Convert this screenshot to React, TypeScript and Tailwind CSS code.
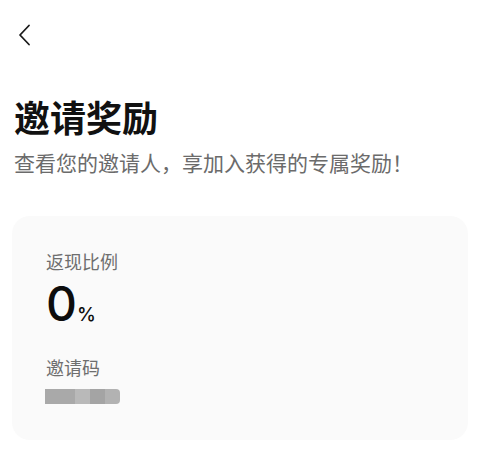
import React from "react";

export default function App() {
  return (
    <div
      className="w-[483px] h-[469px] bg-white overflow-hidden"
      style={{ fontFamily: '"Noto Sans CJK SC", "Noto Sans", sans-serif' }}
    >
      <div className="pt-[24px] pl-[17px]">
        <svg width="14" height="22" viewBox="0 0 14 22" fill="none">
          <polyline
            points="12,1.5 3,11 12,20.5"
            stroke="#1a1a1a"
            strokeWidth="1.8"
            strokeLinecap="round"
            strokeLinejoin="round"
          />
        </svg>
      </div>
      <h1 className="mt-[48px] pl-[14px] text-[36px] leading-[44px] font-bold text-[#111111]">
        邀请奖励
      </h1>
      <p className="mt-[10px] pl-[14px] text-[21px] leading-[28px] text-[#6b6b6b]">
        查看您的邀请人，享加入获得的专属奖励！
      </p>
      <div className="mt-[40px] ml-[12px] w-[456px] h-[224px] rounded-[18px] bg-[#fafafa] pl-[34px] pt-[33px]">
        <div className="text-[18px] leading-[24px] text-[#6e6e6e]">返现比例</div>
        <div
          className="mt-[7px] flex items-baseline text-[#0d0d0d]"
          style={{ fontFamily: "Inter, sans-serif" }}
        >
          <span className="text-[48px] leading-[48px] font-medium">0</span>
          <span className="text-[19px] leading-[19px] font-medium">%</span>
        </div>
        <div className="mt-[27px] text-[18px] leading-[24px] text-[#6e6e6e]">邀请码</div>
        <div className="mt-[10px] flex h-[15px] w-[75px] -ml-[1px] blur-[0.6px]">
          <div className="w-[30px] bg-[#a9a9a9]" />
          <div className="w-[15px] bg-[#b9b9b9]" />
          <div className="w-[15px] bg-[#a4a4a4]" />
          <div className="w-[15px] bg-[#b2b2b2] rounded-r-[4px]" />
        </div>
      </div>
    </div>
  );
}
